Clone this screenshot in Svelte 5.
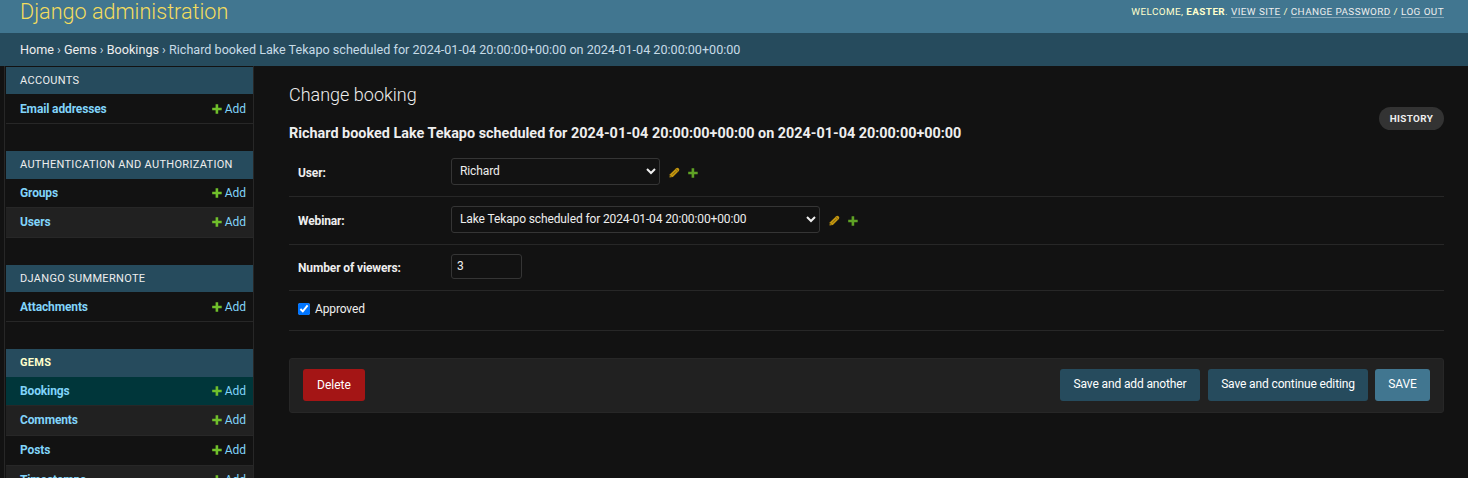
<script>
  const apps = [
    { name: 'Accounts', head: 27, models: [{ name: 'Email addresses', h: 30 }] },
    { name: 'Authentication and Authorization', head: 28, models: [{ name: 'Groups', h: 29 }, { name: 'Users', h: 30 }] },
    { name: 'Django Summernote', head: 27, models: [{ name: 'Attachments', h: 30 }] },
    {
      name: 'Gems',
      head: 28,
      current: true,
      models: [
        { name: 'Bookings', h: 29, current: true },
        { name: 'Comments', h: 30 },
        { name: 'Posts', h: 30 },
        { name: 'Timestamps', h: 30 }
      ]
    }
  ];
  const webinar = 'Lake Tekapo scheduled for 2024-01-04 20:00:00+00:00';
  const booking = `Richard booked ${webinar} on 2024-01-04 20:00:00+00:00`;
</script>

{#snippet plus(color)}
  <svg class="plus" viewBox="0 0 10 10" width="10" height="10"><path d="M3.6 0.3h2.6v3.4h3.5v2.5H6.2v3.5H3.6V6.2H0.2V3.7h3.4z" fill={color} /></svg>
{/snippet}

{#snippet related()}
  <a class="rel edit" href="#edit" aria-label="Change">
    <svg viewBox="0 0 11 11" width="11" height="11">
      <path d="M0.5 10.5 0.9 7.3 6.9 1.4Q8.2 0.2 9.6 1.3 11 2.7 9.9 4L3.9 9.9z" fill="#c3960f" />
      <path d="M6.8 2.1 9.2 4.4M3.4 7.8 7 4.2" stroke="#6d5510" stroke-width="0.7" fill="none" />
      <path d="M1.2 8.6 2.5 9.8" stroke="#121212" stroke-width="0.6" />
    </svg>
  </a>
  <a class="rel" href="#add" aria-label="Add another">{@render plus('#5fa225')}</a>
{/snippet}

<div class="page">
  <header>
    <a class="brand" href="#home">Django administration</a>
    <div class="tools">
      Welcome, <strong>Easter</strong>. <a href="#site">View site</a> / <a href="#password">Change password</a> / <a href="#logout">Log out</a>
    </div>
  </header>
  <div class="crumbs">
    <span><a href="#home">Home</a> › <a href="#gems">Gems</a> › <a href="#bookings">Bookings</a> › {booking}</span>
  </div>
  <div class="main">
    <nav>
      {#each apps as app}
        <section>
          <div class="caption" class:current={app.current} style:height="{app.head}px">{app.name}</div>
          {#each app.models as model, i}
            <div class="model" class:even={i % 2 === 1} class:later={i > 0} class:selected={model.current} style:height="{model.h}px">
              <a class="name" href="#model">{model.name}</a>
              <a class="add" href="#add">{@render plus('#70bf2b')}<span>Add</span></a>
            </div>
          {/each}
        </section>
      {/each}
    </nav>
    <main>
      <h1>Change booking</h1>
      <div class="subhead">
        <h2>{booking}</h2>
        <a class="history" href="#history">History</a>
      </div>
      <form>
        <div class="row user">
          <label for="user">User:</label>
          <select id="user"><option>Richard</option></select>
          {@render related()}
        </div>
        <div class="row webinar">
          <label for="webinar">Webinar:</label>
          <select id="webinar"><option>{webinar}</option></select>
          {@render related()}
        </div>
        <div class="row viewers">
          <label for="viewers">Number of viewers:</label>
          <input id="viewers" type="text" value="3" />
        </div>
        <div class="row approved">
          <input id="approved" type="checkbox" checked />
          <label for="approved">Approved</label>
        </div>
        <div class="submit">
          <button type="button" class="delete">Delete</button>
          <button type="button" class="another">Save and add another</button>
          <button type="button" class="continue">Save and continue editing</button>
          <button type="button" class="save">SAVE</button>
        </div>
      </form>
    </main>
  </div>
</div>

<style>
  :global(body) { background: #121212; overflow: hidden; }
  .page {
    height: 478px;
    overflow: hidden;
    display: flex;
    flex-direction: column;
    background: #121212;
    color: #eee;
    font-family: Roboto, "Liberation Sans", sans-serif;
    font-size: 12.6px;
  }
  .page * { box-sizing: border-box; }
  a { text-decoration: none; color: inherit; }
  svg { display: block; flex: none; }
  header {
    height: 33px;
    flex: none;
    background: #417690;
    display: flex;
    justify-content: space-between;
    padding: 0 24px 0 20px;
  }
  .brand { font-size: 21.6px; font-weight: 300; color: #f5dd5d; line-height: 24px; white-space: nowrap; }
  .tools {
    font-size: 9.9px;
    letter-spacing: 0.42px;
    text-transform: uppercase;
    color: #ffc;
    line-height: 11px;
    padding-top: 6px;
    white-space: nowrap;
  }
  .tools a { color: #eee; border-bottom: 1px solid rgba(255, 255, 255, 0.35); }
  .crumbs {
    height: 33px;
    flex: none;
    background: #264b5d;
    color: #c6dbe7;
    display: flex;
    align-items: center;
    padding: 0 20px;
    font-size: 12.6px;
  }
  .crumbs a { color: #eee; }
  .main { flex: 1; min-height: 0; display: flex; }
  nav {
    width: 250px;
    margin-left: 4px;
    flex: none;
    overflow: hidden;
    border-left: 1px solid #272727;
    border-right: 1px solid #272727;
    padding: 1px 0 0 1px;
    display: flex;
    flex-direction: column;
    gap: 27px;
  }
  nav section { flex: none; }
  .caption {
    background: #264b5d;
    padding: 0 0 1px 14px;
    display: flex;
    align-items: center;
    text-transform: uppercase;
    font-size: 11px;
    letter-spacing: 0.32px;
    color: #eee;
  }
  .caption.current { color: #ffc; font-weight: 700; padding-bottom: 2px; }
  .model {
    display: flex;
    justify-content: space-between;
    align-items: center;
    border-bottom: 1px solid #272727;
    padding: 0 7px 0 14px;
    color: #81d4fa;
    font-size: 12px;
  }
  .later { padding-bottom: 2px; }
  .even { background: #212121; }
  .selected { background: #00363a; }
  .name { font-weight: 700; letter-spacing: -0.13px; }
  .add { display: flex; align-items: center; gap: 3px; }
  main { flex: 1; min-width: 0; padding: 18px 24px 0 35px; }
  h1 { margin: 0; font-size: 18px; line-height: 22px; font-weight: 300; }
  .subhead { display: flex; justify-content: space-between; height: 43px; }
  h2 { margin: 18px 0 0; font-size: 14.4px; line-height: 20px; font-weight: 700; white-space: nowrap; }
  .history {
    width: 65px;
    height: 23px;
    margin-top: 1px;
    border-radius: 12px;
    background: #333;
    display: flex;
    align-items: center;
    justify-content: center;
    font-size: 9.9px;
    font-weight: 700;
    letter-spacing: 0.35px;
    text-transform: uppercase;
  }
  .row { display: flex; align-items: center; border-bottom: 1px solid #272727; padding-left: 9px; }
  .row label { width: 153px; font-size: 12px; letter-spacing: -0.13px; font-weight: 700; }
  .user { height: 48px; }
  .webinar { height: 48px; }
  .viewers { height: 46px; }
  .approved { height: 40px; padding-bottom: 3px; }
  .row.approved label { width: auto; font-weight: 400; margin-left: 5px; }
  select,
  input[type="text"] {
    font-family: inherit;
    font-size: 12px;
    letter-spacing: -0.12px;
    color: #eee;
    background: #121212;
    border: 1px solid #353535;
    border-radius: 3px;
    margin: 0 0 2px;
  }
  select { height: 27px; padding: 0 4px 1px; }
  #user { width: 209px; }
  #webinar { width: 369px; }
  #viewers { width: 71px; height: 25px; padding: 0 5px 2px; }
  input[type="checkbox"] { width: 12px; height: 12px; margin: 0; }
  .rel { display: block; margin-left: 8px; }
  .edit { margin-left: 9px; }
  .submit {
    margin-top: 27px;
    height: 55px;
    border: 1px solid #272727;
    border-radius: 3px;
    background: #212121;
    padding: 10px 13px;
    display: flex;
    gap: 8px;
  }
  button {
    height: 32px;
    border: 0;
    border-radius: 3px;
    padding: 0 0 2px;
    font: 400 12px Roboto, "Liberation Sans", sans-serif;
    letter-spacing: -0.13px;
    color: #fff;
    background: #264b5d;
    white-space: nowrap;
  }
  .delete { width: 62px; background: #a41515; margin-right: auto; padding: 0; letter-spacing: 0; }
  .another { width: 140px; }
  .continue { width: 160px; }
  .save { width: 55px; background: #417690; margin-left: -1px; }
</style>
